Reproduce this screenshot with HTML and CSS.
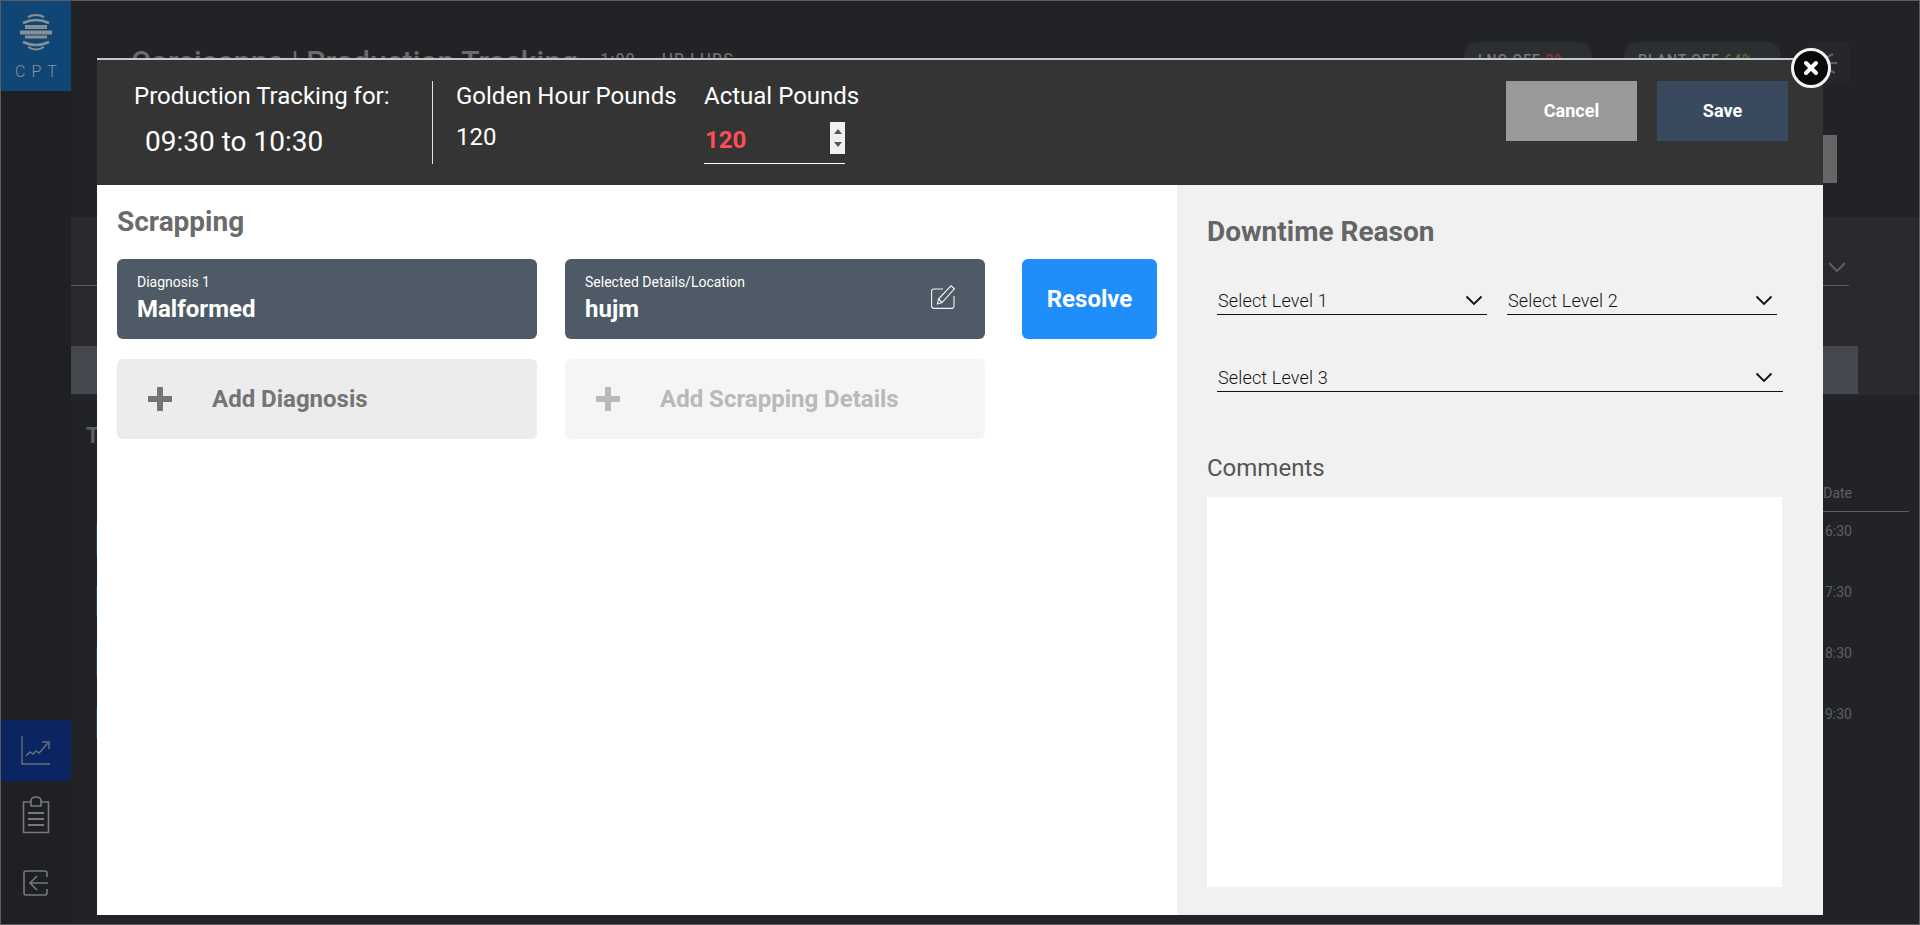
FILE: index.html
```html
<!DOCTYPE html>
<html>
<head>
    <title>Production Tracking</title>
    <link rel="stylesheet" href="styles.css">
</head>
<body>
    <div class="app">
        <!-- Sidebar -->
        <aside class="sidebar">
            <div class="logo">
                <svg width="36" height="38" viewBox="0 0 36 38" fill="none" stroke="#8b8f93">
                    <path d="M10 3 Q18 -1 26 3" stroke-width="2"/>
                    <path d="M5 9 Q18 3 31 9" stroke-width="2.5"/>
                    <path d="M7 13H29" stroke-width="4"/>
                    <path d="M2 18.500H34" stroke-width="4"/>
                    <path d="M7 23H29" stroke-width="3"/>
                    <path d="M5 28 Q18 34 31 28" stroke-width="2.5"/>
                    <path d="M10 33 Q18 38 26 33" stroke-width="2"/>
                </svg>
                <span class="logo-text">CPT</span>
            </div>
            <nav class="side-nav">
                <div class="nav-item active">
                    <svg width="30" height="30" viewBox="0 0 30 30" fill="none" stroke="#6a6f78" stroke-width="1.4">
                        <path d="M1 1V29H29"/>
                        <path d="M5 21 L9 17 L12 19 L15 16 L18 18 L27 8"/>
                        <path d="M21 7H28V14"/>
                    </svg>
                </div>
                <div class="nav-item">
                    <svg width="28" height="38" viewBox="0 0 28 38" fill="none" stroke="#77797c" stroke-width="1.6">
                        <path d="M9 6H1.500V36.500H26.500V6H19"/>
                        <path d="M9 10V4.500A5 3.500 0 0 1 19 4.500V10Z"/>
                        <path d="M6 17H22M6 23H22M6 29H22" stroke-width="2"/>
                    </svg>
                </div>
                <div class="nav-item">
                    <svg width="26" height="26" viewBox="0 0 26 26" fill="none" stroke="#77797c" stroke-width="1.6">
                        <path d="M24 7V3A2 2 0 0 0 22 1H3A2 2 0 0 0 1 3V23A2 2 0 0 0 3 25H22A2 2 0 0 0 24 23V19"/>
                        <path d="M25 13H8M14 6L7 13L14 20"/>
                    </svg>
                </div>
            </nav>
        </aside>

        <!-- Page behind the dialog -->
        <main class="page">
            <header class="page-header">
                <h1 class="page-title">Corsicanna | Production Tracking</h1>
                <span class="page-sub">1:00</span>
                <span class="page-sub">HR LHRS</span>
                <div class="pills">
                    <span class="pill">LNG OEE <b class="bad">2%</b></span>
                    <span class="pill">PLANT OEE <b class="good">64%</b></span>
                </div>
                <div class="head-tools">
                    <div class="gear">
                        <svg width="40" height="42" viewBox="0 0 40 42" fill="none" stroke="#5f6063" stroke-width="2">
                            <path d="M7 21L24 12M7 21L28 21M7 21L26 31"/>
                        </svg>
                    </div>
                    <div class="tool-button"></div>
                </div>
            </header>
            <section class="filter-card">
                <div class="bg-select">
                    <svg width="18" height="11" viewBox="0 0 18 11" fill="none" stroke="#5c5d60" stroke-width="2"><path d="M1 1L9 9L17 1"/></svg>
                </div>
                <div class="bg-button"></div>
            </section>
            <section class="history">
                <h2 class="history-title">Tracking History</h2>
                <div class="history-head">Date</div>
                <div class="history-row"><span class="row-tag"></span><span>16:30</span></div>
                <div class="history-row"><span class="row-tag"></span><span>17:30</span></div>
                <div class="history-row"><span class="row-tag"></span><span>18:30</span></div>
                <div class="history-row"><span class="row-tag"></span><span>19:30</span></div>
            </section>
        </main>

        <!-- Dialog -->
        <div class="modal">
            <div class="modal-header">
                <div class="head-col first">
                    <div class="head-label">Production Tracking for:</div>
                    <div class="head-time">09:30 to 10:30</div>
                </div>
                <div class="head-col golden">
                    <div class="head-label">Golden Hour Pounds</div>
                    <div class="head-value">120</div>
                </div>
                <div class="head-col">
                    <div class="head-label">Actual Pounds</div>
                    <div class="pounds-input">
                        <span class="pounds-value">120</span>
                        <span class="spinner">
                            <svg width="8" height="26" viewBox="0 0 8 26" fill="#555"><path d="M4 4L8 9H0Z"/><path d="M0 17H8L4 22Z"/></svg>
                        </span>
                    </div>
                </div>
                <div class="head-actions">
                    <button class="btn btn-cancel">Cancel</button>
                    <button class="btn btn-save">Save</button>
                </div>
            </div>

            <div class="modal-body">
                <div class="scrap-panel">
                    <h2 class="panel-title">Scrapping</h2>
                    <div class="scrap-grid">
                        <div class="info-card">
                            <div>
                                <div class="info-label">Diagnosis 1</div>
                                <div class="info-value">Malformed</div>
                            </div>
                        </div>
                        <div class="info-card">
                            <div>
                                <div class="info-label">Selected Details/Location</div>
                                <div class="info-value">hujm</div>
                            </div>
                            <svg class="edit-icon" width="24" height="24" viewBox="0 0 24 24" fill="none" stroke="#f2f4f5" stroke-width="1.1">
                                <path d="M12 4H3A2.500 2.500 0 0 0 .6 6.500V21A2.500 2.500 0 0 0 3 23.400H20.500A2.500 2.500 0 0 0 23 21V11"/>
                                <path d="M7.500 14L20 .8L23.400 3.800L11 17.500L6.500 19Z"/>
                                <path d="M7.500 14L11 17.500"/>
                            </svg>
                        </div>
                        <button class="resolve">Resolve</button>
                        <div class="add-card">
                            <svg width="24" height="24" viewBox="0 0 24 24" fill="#757575"><path d="M9 0H15V9H24V15H15V24H9V15H0V9H9Z"/></svg>
                            <span>Add Diagnosis</span>
                        </div>
                        <div class="add-card disabled">
                            <svg width="24" height="24" viewBox="0 0 24 24" fill="#b9b9b9"><path d="M9 0H15V9H24V15H15V24H9V15H0V9H9Z"/></svg>
                            <span>Add Scrapping Details</span>
                        </div>
                    </div>
                </div>

                <div class="reason-panel">
                    <h2 class="reason-title">Downtime Reason</h2>
                    <div class="select-grid">
                        <div class="select-box">
                            <span>Select Level 1</span>
                            <svg width="18" height="11" viewBox="0 0 18 11" fill="none" stroke="#111" stroke-width="1.8"><path d="M1.500 1.500L9 9L16.500 1.500"/></svg>
                        </div>
                        <div class="select-box">
                            <span>Select Level 2</span>
                            <svg width="18" height="11" viewBox="0 0 18 11" fill="none" stroke="#111" stroke-width="1.8"><path d="M1.500 1.500L9 9L16.500 1.500"/></svg>
                        </div>
                        <div class="select-box wide">
                            <span>Select Level 3</span>
                            <svg width="18" height="11" viewBox="0 0 18 11" fill="none" stroke="#111" stroke-width="1.8"><path d="M1.500 1.500L9 9L16.500 1.500"/></svg>
                        </div>
                    </div>
                    <label class="comments-label" for="comments">Comments</label>
                    <textarea class="comments" id="comments"></textarea>
                </div>
            </div>

            <button class="close-btn" aria-label="Close">
                <svg width="16" height="16" viewBox="0 0 16 16" stroke="#fff" stroke-width="4" stroke-linecap="round"><path d="M3 3L13 13M13 3L3 13"/></svg>
            </button>
        </div>
    </div>
</body>
</html>
```

FILE: styles.css
```css
* {
    box-sizing: border-box;
}
body {
    margin: 0;
    font-family: Roboto, "Liberation Sans", sans-serif;
    background: #222327;
}
h1, h2 {
    margin: 0;
}
button {
    font-family: inherit;
    border: none;
    cursor: pointer;
}

.app {
    position: relative;
    display: flex;
    height: 925px;
    overflow: hidden;
    border: 1px solid #5c5c5c;
    background: #222327;
}

/* Sidebar */
.sidebar {
    display: flex;
    flex-direction: column;
    justify-content: space-between;
    width: 70px;
    flex-shrink: 0;
    background: #1f2024;
}
.logo {
    display: flex;
    flex-direction: column;
    align-items: center;
    height: 90px;
    padding-top: 13px;
    background: #104676;
}
.logo-text {
    margin-top: 10px;
    margin-left: 6px;
    font-size: 16px;
    font-weight: 300;
    letter-spacing: 6px;
    color: #8592a0;
}
.side-nav {
    display: flex;
    flex-direction: column;
    padding-bottom: 7px;
}
.nav-item {
    display: flex;
    align-items: center;
    justify-content: center;
    height: 68px;
}
.nav-item.active {
    height: 61px;
    padding-bottom: 1px;
    background: #0a2562;
}

/* Page behind the dialog */
.page {
    flex: 1;
    min-width: 0;
    color: #5f6063;
}
.page-header {
    display: flex;
    align-items: flex-start;
    height: 216px;
    padding: 41px 70px 0 60px;
}
.page-title {
    font-size: 30px;
    line-height: 40px;
    font-weight: 500;
    letter-spacing: .1px;
    color: #6b6c6f;
}
.page-sub {
    margin-left: 22px;
    font-size: 16px;
    line-height: 36px;
    font-weight: 500;
    letter-spacing: 1px;
    color: #6b6c6f;
}
.page-sub + .page-sub {
    margin-left: 26px;
}
.pills {
    display: flex;
    gap: 32px;
    margin-left: auto;
}
.pill {
    display: block;
    width: 128px;
    height: 40px;
    padding: 10px 14px;
    border-radius: 14px;
    background: #2c2f32;
    font-size: 14px;
    font-weight: 500;
    letter-spacing: 1px;
    color: #77797b;
}
.pill:last-child {
    width: 157px;
}
.bad {
    color: #8a3438;
}
.good {
    color: #53703f;
}
.head-tools {
    width: 40px;
    margin-left: 28px;
}
.gear {
    height: 42px;
    background: #26272b;
}
.tool-button {
    width: 28px;
    height: 48px;
    margin-top: 51px;
    background: #666;
}
.filter-card {
    height: 178px;
    padding-top: 35px;
    background: #2a2a2e;
}
.bg-select {
    display: flex;
    justify-content: flex-end;
    width: 1778px;
    height: 34px;
    padding: 10px 3px 0 0;
    border-bottom: 1px solid #5d5e60;
}
.bg-button {
    width: 1787px;
    height: 48px;
    margin-top: 60px;
    background: #45494f;
}
.history {
    padding: 0 10px 0 15px;
}
.history-title {
    margin-top: 28px;
    height: 60px;
    font-size: 22px;
    font-weight: 700;
    color: #606164;
}
.history-head {
    height: 29px;
    margin-left: 30px;
    font-size: 14px;
    line-height: 20px;
    text-align: right;
    padding-right: 57px;
    border-bottom: 1px solid #5d5e60;
}
.history-row {
    display: flex;
    justify-content: space-between;
    align-items: flex-start;
    height: 61px;
    padding-top: 9px;
    padding-right: 57px;
    font-size: 14px;
    line-height: 20px;
}
.row-tag {
    width: 40px;
    height: 30px;
    margin-left: 10px;
    margin-top: 4px;
    background: #0f4a7d;
}

/* Dialog */
.modal {
    position: absolute;
    left: 96px;
    top: 57px;
    width: 1726px;
    height: 857px;
    display: flex;
    flex-direction: column;
    background: #fff;
}
.modal-header {
    display: flex;
    height: 127px;
    padding: 21px 35px 0 37px;
    border-top: 2px solid #c8c8c8;
    background: #343434;
    color: #fff;
}
.head-col.first {
    width: 299px;
    height: 83px;
    border-right: 1px solid #e4e4e4;
}
.head-col.golden {
    width: 271px;
    padding-left: 23px;
}
.head-label {
    font-size: 24px;
    line-height: 30px;
    font-weight: 400;
}
.head-time {
    margin-top: 16px;
    margin-left: 11px;
    font-size: 28px;
    line-height: 30px;
}
.head-value {
    margin-top: 11px;
    font-size: 24px;
    line-height: 30px;
}
.pounds-input {
    display: flex;
    justify-content: space-between;
    align-items: flex-start;
    width: 141px;
    height: 42px;
    margin-top: 11px;
    border-bottom: 1px solid #fff;
}
.pounds-value {
    margin-top: 2px;
    margin-left: 1px;
    font-size: 24px;
    line-height: 32px;
    font-weight: 700;
    color: #ff4d57;
}
.spinner {
    display: flex;
    justify-content: center;
    align-items: center;
    width: 15px;
    height: 32px;
    background: #f0f0f0;
}
.head-actions {
    display: flex;
    gap: 20px;
    margin-left: auto;
}
.btn {
    width: 131px;
    height: 60px;
    padding-bottom: 3px;
    font-size: 18px;
    font-weight: 700;
    color: #fff;
}
.btn-cancel {
    background: #999;
}
.btn-save {
    background: #3a4a5e;
}
.close-btn {
    position: absolute;
    right: -8px;
    top: -10px;
    display: flex;
    align-items: center;
    justify-content: center;
    width: 40px;
    height: 40px;
    padding: 0;
    border-radius: 50%;
    border: 3px solid #f4f4f4;
    background: #0a0a0a;
}
.modal-body {
    flex: 1;
    display: flex;
    min-height: 0;
}
.scrap-panel {
    width: 1080px;
    padding: 20px 20px 0;
    background: #fff;
}
.panel-title {
    height: 54px;
    font-size: 28px;
    line-height: 34px;
    font-weight: 700;
    color: #6b6b6b;
}
.scrap-grid {
    display: grid;
    grid-template-columns: 420px 420px 135px;
    grid-auto-rows: 80px;
    column-gap: 28px;
    row-gap: 20px;
}
.scrap-grid .resolve {
    margin-left: 9px;
}
.info-card {
    display: flex;
    align-items: flex-start;
    justify-content: space-between;
    padding: 14px 30px 0 20px;
    border-radius: 6px;
    background: #4e5a65;
    color: #fff;
}
.info-label {
    font-size: 14px;
    line-height: 18px;
}
.info-value {
    margin-top: 2px;
    font-size: 24px;
    line-height: 32px;
    font-weight: 700;
}
.edit-icon {
    margin-top: 12px;
}
.resolve {
    width: 135px;
    border-radius: 6px;
    background: #1f8efa;
    color: #fff;
    font-size: 24px;
    font-weight: 700;
}
.add-card {
    display: flex;
    align-items: center;
    gap: 40px;
    padding-left: 31px;
    border-radius: 6px;
    background: #ececec;
    color: #757575;
    font-size: 24px;
    font-weight: 700;
}
.add-card.disabled {
    background: #f5f5f5;
    color: #b9b9b9;
}
.reason-panel {
    flex: 1;
    padding: 29px 40px 0 30px;
    background: #f1f1f1;
}
.reason-title {
    height: 72px;
    font-size: 28px;
    line-height: 36px;
    font-weight: 700;
    color: #656565;
}
.select-grid {
    display: grid;
    grid-template-columns: 270px 270px;
    column-gap: 20px;
    row-gap: 48px;
    margin-left: 10px;
}
.select-box {
    display: flex;
    align-items: center;
    justify-content: space-between;
    height: 29px;
    padding: 1px 4px 0 1px;
    border-bottom: 1px solid #111;
    font-size: 18px;
    font-weight: 300;
    letter-spacing: .15px;
    color: #111;
}
.select-box.wide {
    grid-column: 1 / 3;
    width: 566px;
    padding-right: 10px;
}
.comments-label {
    display: block;
    margin-top: 61px;
    font-size: 24px;
    line-height: 30px;
    font-weight: 400;
    color: #555;
}
.comments {
    display: block;
    width: 575px;
    height: 390px;
    margin-top: 14px;
    border: none;
    resize: none;
    background: #fff;
}
```
